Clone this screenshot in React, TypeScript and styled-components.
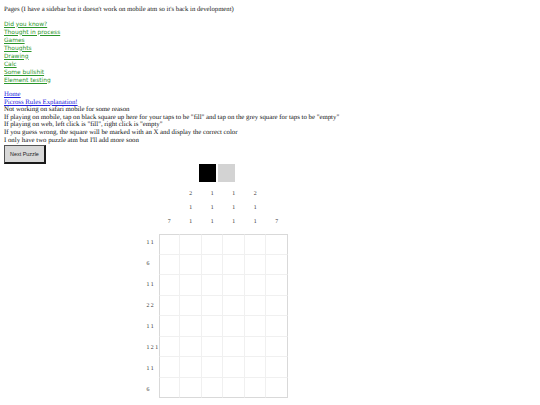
import React from "react";
import styled, { createGlobalStyle } from "styled-components";

const GlobalStyle = createGlobalStyle`
  html, body {
    margin: 0;
    padding: 0;
    background: #ffffff;
  }
  body {
    font-family: "Liberation Serif", "Times New Roman", serif;
    font-size: 6.8px;
    color: #111;
    text-rendering: geometricPrecision;
  }
`;

const Page = styled.div`
  padding: 6px 4px 0 4px;
  display: flex;
  flex-direction: column;
`;

const Heading = styled.div`
  font-size: 6.7px;
  line-height: 8px;
  color: #1a1a1a;
  white-space: nowrap;
`;

const NavList = styled.nav`
  margin-top: 6.5px;
  display: flex;
  flex-direction: column;
  align-items: flex-start;
`;

const NavLink = styled.a`
  font-family: "DejaVu Sans", Verdana, sans-serif;
  font-size: 5.9px;
  line-height: 8px;
  color: #2a952a;
  text-decoration: underline;
  text-decoration-thickness: 0.5px;
  text-underline-offset: 1px;
`;

const Info = styled.div`
  margin-top: 6.5px;
  display: flex;
  flex-direction: column;
  align-items: flex-start;
`;

const InfoLink = styled.a`
  line-height: 7.6px;
  color: #2222dd;
  text-decoration: underline;
  text-decoration-thickness: 0.5px;
`;

const InfoLine = styled.div`
  line-height: 7.6px;
  color: #111;
  white-space: nowrap;
`;

const NextButton = styled.button`
  margin-top: 1px;
  width: 42px;
  height: 19px;
  padding: 0;
  font-family: "Liberation Sans", Arial, sans-serif;
  font-size: 5.4px;
  color: #222;
  background: #d8d8d8;
  border-style: solid;
  border-width: 1px 2px 2px 1px;
  border-color: #555 #1a1a1a #1a1a1a #555;
`;

const Puzzle = styled.section`
  width: 426px;
  display: flex;
  flex-direction: column;
  align-items: center;
`;

const ModeRow = styled.div`
  display: flex;
  gap: 1.5px;
`;

const ModeSwatch = styled.div<{ $tone: string }>`
  width: 17px;
  height: 18px;
  background: ${(p) => p.$tone};
`;

const Board = styled.div`
  margin-top: 5px;
  display: grid;
  grid-template-columns: 12px 129px;
  font-size: 5.8px;
  color: #333;
`;

const Corner = styled.div``;

const ColumnClues = styled.div`
  display: grid;
  grid-template-columns: repeat(6, 21.5px);
  padding-bottom: 5px;
`;

const ColumnClue = styled.div`
  display: flex;
  flex-direction: column;
  justify-content: flex-end;
  align-items: center;
`;

const ClueNumber = styled.span`
  height: 14px;
  line-height: 14px;
`;

const RowClues = styled.div`
  display: flex;
  flex-direction: column;
  margin-top: -1.5px;
`;

const RowClue = styled.div`
  height: 21px;
  display: flex;
  align-items: center;
  white-space: nowrap;
`;

const Cells = styled.div`
  display: grid;
  grid-template-columns: repeat(6, 21.5px);
  grid-auto-rows: 20.5px;
`;

const Cell = styled.div<{ $col: number; $row: number }>`
  box-sizing: border-box;
  background: #fff;
  border-right: 1px solid ${(p) => (p.$col === 5 ? "#d9d9d9" : "#f0f0f0")};
  border-bottom: 1px solid ${(p) => (p.$row === 7 ? "#d9d9d9" : "#f0f0f0")};
  border-left: ${(p) => (p.$col === 0 ? "1px solid #d9d9d9" : "none")};
  border-top: ${(p) => (p.$row === 0 ? "1px solid #d9d9d9" : "none")};
`;

const pages = [
  "Did you know?",
  "Thought in process",
  "Games",
  "Thoughts",
  "Drawing",
  "Calc",
  "Some bullshit",
  "Element testing",
];

const notes = [
  "Not working on safari mobile for some reason",
  'If playing on mobile, tap on black square up here for your taps to be "fill" and tap on the grey square for taps to be "empty"',
  'If playing on web, left click is "fill", right click is "empty"',
  "If you guess wrong, the square will be marked with an X and display the correct color",
  "I only have two puzzle atm but I'll add more soon",
];

const columnClues: number[][] = [[7], [2, 1, 1], [1, 1, 1], [1, 1, 1], [2, 1, 1], [7]];
const rowClues = ["1 1", "6", "1 1", "2 2", "1 1", "1 2 1", "1 1", "6"];

export default function App() {
  return (
    <>
      <GlobalStyle />
      <Page>
        <Heading>
          Pages (I have a sidebar but it doesn't work on mobile atm so it's back in development)
        </Heading>
        <NavList>
          {pages.map((p) => (
            <NavLink key={p} href="#">
              {p}
            </NavLink>
          ))}
        </NavList>
        <Info>
          <InfoLink href="#">Home</InfoLink>
          <InfoLink href="#">Picross Rules Explanation!</InfoLink>
          {notes.map((n) => (
            <InfoLine key={n}>{n}</InfoLine>
          ))}
          <NextButton>Next Puzzle</NextButton>
        </Info>
        <Puzzle>
          <ModeRow>
            <ModeSwatch $tone="#000000" />
            <ModeSwatch $tone="#d3d3d3" />
          </ModeRow>
          <Board>
            <Corner />
            <ColumnClues>
              {columnClues.map((clue, i) => (
                <ColumnClue key={`c${i}`}>
                  {clue.map((n, j) => (
                    <ClueNumber key={j}>{n}</ClueNumber>
                  ))}
                </ColumnClue>
              ))}
            </ColumnClues>
            <RowClues>
              {rowClues.map((clue, r) => (
                <RowClue key={`r${r}`}>{clue}</RowClue>
              ))}
            </RowClues>
            <Cells>
              {rowClues.map((_, r) =>
                Array.from({ length: 6 }, (_, c) => (
                  <Cell key={`${r}-${c}`} $col={c} $row={r} />
                ))
              )}
            </Cells>
          </Board>
        </Puzzle>
      </Page>
    </>
  );
}
